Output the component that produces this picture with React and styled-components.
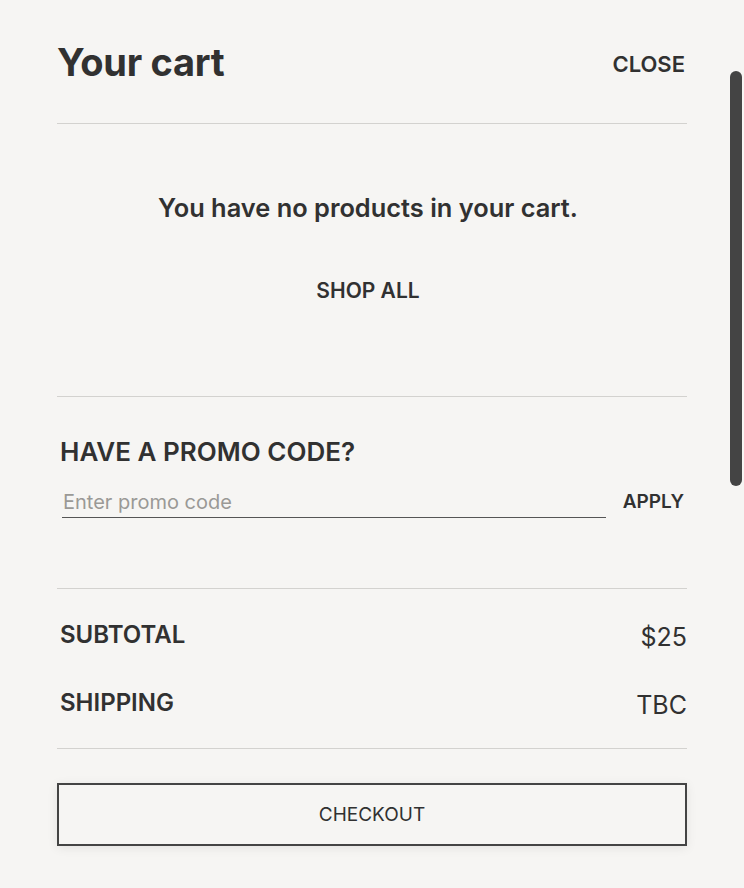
import React, { useState } from "react"
import styled, { createGlobalStyle } from "styled-components"

const GlobalStyle = createGlobalStyle`
  html, body {
    margin: 0;
    padding: 0;
    background: #f6f5f3;
  }
  body {
    font-family: Inter, "Noto Sans", sans-serif;
    color: #313131;
  }
`

const Drawer = styled.aside`
  position: relative;
  box-sizing: border-box;
  width: 744px;
  height: 888px;
  padding: 0 57px;
  background: #f6f5f3;
  overflow: hidden;
`

const ScrollThumb = styled.div`
  position: absolute;
  top: 71px;
  right: 2px;
  width: 12px;
  height: 415px;
  border-radius: 6px;
  background: #444;
`

const Header = styled.header`
  display: flex;
  align-items: center;
  justify-content: space-between;
  height: 123px;
  border-bottom: 1px solid #d3d2cf;
`

const Title = styled.h1`
  margin: 0;
  font-size: 38px;
  font-weight: 700;
  letter-spacing: -0.3px;
`

const TextButton = styled.button`
  border: 0;
  background: none;
  padding: 0;
  font-family: inherit;
  color: #313131;
  font-size: ${p => p.$size || 19}px;
  font-weight: 600;
  line-height: 24px;
  text-transform: uppercase;
  cursor: pointer;
`

const CloseButton = styled(TextButton)`
  margin: 4px 2px 0 0;
`

const Section = styled.section`
  display: flex;
  flex-direction: column;
  padding: ${p => p.$pad};
  border-bottom: 1px solid #d3d2cf;
`

const EmptyMessage = styled.p`
  margin: 0 0 56px;
  text-align: center;
  font-size: 25.4px;
  font-weight: 600;
  line-height: 30px;
`

const Label = styled.h3`
  margin: 0;
  padding-left: 3px;
  font-size: ${p => p.$size || 24}px;
  font-weight: 600;
  line-height: 30px;
  text-transform: uppercase;
`

const PromoRow = styled.div`
  display: flex;
  align-items: center;
  gap: 17px;
  margin-top: 19px;
  padding: 0 3px 0 5px;
`

const PromoInput = styled.input`
  flex: 1;
  box-sizing: border-box;
  height: 32px;
  padding: 0 1px;
  border: 0;
  border-bottom: 1px solid #555;
  background: transparent;
  font-family: inherit;
  font-size: 20px;
  color: #313131;
  outline: none;
  &::placeholder {
    color: #9a9996;
  }
`

const TotalRow = styled.div`
  display: flex;
  align-items: center;
  justify-content: space-between;
  & + & {
    margin-top: 38px;
  }
`

const TotalValue = styled.span`
  padding-top: 4px;
  font-size: 25px;
  font-weight: 400;
  line-height: 26px;
`

const Checkout = styled.button`
  display: block;
  box-sizing: border-box;
  width: 100%;
  height: 63px;
  margin-top: 34px;
  border: 2px solid #444;
  background: #f6f5f3;
  box-shadow: 0 2px 10px rgba(0, 0, 0, 0.08);
  font-family: inherit;
  font-size: 19px;
  color: #313131;
  text-transform: uppercase;
  cursor: pointer;
`

export default function App() {
  const [code, setCode] = useState("")

  return (
    <>
      <GlobalStyle />
      <Drawer>
        <Header>
          <Title>Your cart</Title>
          <CloseButton $size={22}>Close</CloseButton>
        </Header>

        <Section $pad="69px 8px 93px 0">
          <EmptyMessage>You have no products in your cart.</EmptyMessage>
          <TextButton $size={21}>Shop all</TextButton>
        </Section>

        <Section $pad="40px 0 70px">
          <Label $size={26}>Have a promo code?</Label>
          <PromoRow>
            <PromoInput
              placeholder="Enter promo code"
              value={code}
              onChange={e => setCode(e.target.value)}
            />
            <TextButton $size={19}>Apply</TextButton>
          </PromoRow>
        </Section>

        <Section $pad="31px 0 30px">
          <TotalRow>
            <Label>Subtotal</Label>
            <TotalValue>$25</TotalValue>
          </TotalRow>
          <TotalRow>
            <Label>Shipping</Label>
            <TotalValue>TBC</TotalValue>
          </TotalRow>
        </Section>

        <Checkout>Checkout</Checkout>
        <ScrollThumb />
      </Drawer>
    </>
  )
}
